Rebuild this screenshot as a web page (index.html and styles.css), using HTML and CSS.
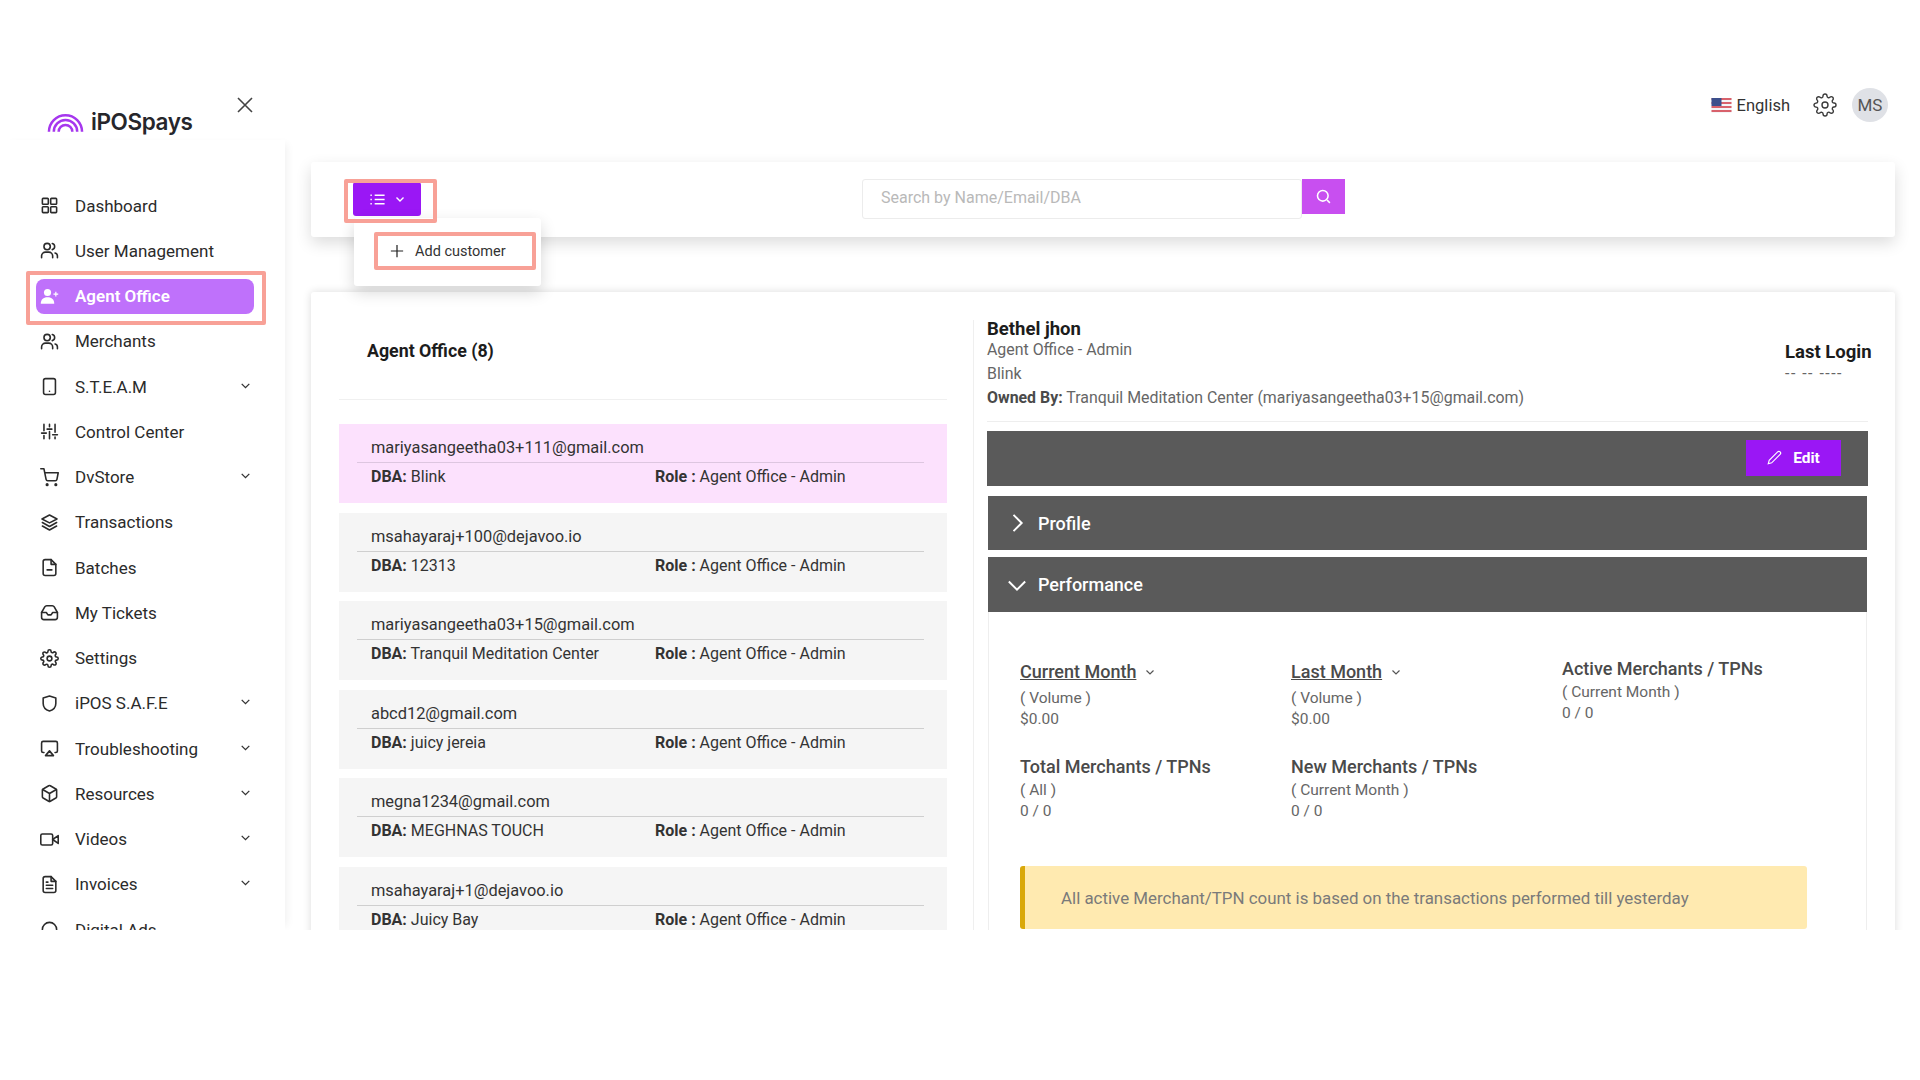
FILE: index.html
```html
<!DOCTYPE html>
<html lang="en">
  <head>
    <meta charset="UTF-8" />
    <title>Agent Office</title>
    <link rel="stylesheet" href="styles.css">
  </head>
  <body>
    <svg class="defs" aria-hidden="true">
      <symbol id="i-grid" viewBox="0 0 24 24"><rect x="3" y="3" width="7.5" height="7.5" rx="1"/><rect x="13.5" y="3" width="7.5" height="7.5" rx="1"/><rect x="3" y="13.5" width="7.5" height="7.5" rx="1"/><rect x="13.5" y="13.5" width="7.5" height="7.5" rx="1"/></symbol>
      <symbol id="i-users" viewBox="0 0 24 24"><path d="M2 21v-2a5 5 0 0 1 5-5h4a5 5 0 0 1 5 5v2"/><circle cx="9" cy="7" r="4"/><path d="M22 21v-2a4 4 0 0 0-3-3.87"/><path d="M15.5 3.13a4 4 0 0 1 0 7.75"/></symbol>
      <symbol id="i-tablet" viewBox="0 0 24 24"><rect x="4.5" y="2" width="15" height="20" rx="2.5"/><path d="M12 18h.01"/></symbol>
      <symbol id="i-sliders" viewBox="0 0 24 24"><path d="M5 3v8M5 17v4M12 3v3M12 12v9M19 3v10M19 19v2M2 14h6M9 9h6M16 16h6"/></symbol>
      <symbol id="i-cart" viewBox="0 0 24 24"><circle cx="9" cy="21" r="1"/><circle cx="20" cy="21" r="1"/><path d="M1 1h4l2.7 13.4a2 2 0 0 0 2 1.6h9.7a2 2 0 0 0 2-1.6L23 6H6"/></symbol>
      <symbol id="i-layers" viewBox="0 0 24 24"><path d="M12 2.5 2.5 7.5l9.5 5 9.5-5z"/><path d="m3 12 9 5 9-5"/><path d="m3 16.5 9 5 9-5"/></symbol>
      <symbol id="i-batch" viewBox="0 0 24 24"><path d="M14 2H6.5A2.5 2.5 0 0 0 4 4.500v15A2.500 2.500 0 0 0 6.500 22h11a2.500 2.500 0 0 0 2.500-2.500V8z"/><path d="M14 2v6h6M9 15h6"/></symbol>
      <symbol id="i-inbox" viewBox="0 0 24 24"><path d="M2 12v6a3 3 0 0 0 3 3h14a3 3 0 0 0 3-3v-6l-4-7a3 3 0 0 0-2.500-1.500h-7A3 3 0 0 0 6 5z"/><path d="M2 12h6l2 3h4l2-3h6"/></symbol>
      <symbol id="i-gear" viewBox="0 0 24 24"><circle cx="12" cy="12" r="3"/><path d="M19.4 15a1.65 1.65 0 0 0 .33 1.82l.06.06a2 2 0 0 1 0 2.83 2 2 0 0 1-2.83 0l-.06-.06a1.65 1.65 0 0 0-1.82-.33 1.65 1.65 0 0 0-1 1.51V21a2 2 0 0 1-2 2 2 2 0 0 1-2-2v-.09A1.65 1.65 0 0 0 9 19.4a1.65 1.65 0 0 0-1.82.33l-.06.06a2 2 0 0 1-2.83 0 2 2 0 0 1 0-2.83l.06-.06a1.65 1.65 0 0 0 .33-1.82 1.65 1.65 0 0 0-1.51-1H3a2 2 0 0 1-2-2 2 2 0 0 1 2-2h.09A1.65 1.65 0 0 0 4.600 9a1.65 1.65 0 0 0-.33-1.82l-.06-.06a2 2 0 0 1 0-2.83 2 2 0 0 1 2.83 0l.06.06a1.65 1.65 0 0 0 1.82.33H9a1.65 1.65 0 0 0 1-1.51V3a2 2 0 0 1 2-2 2 2 0 0 1 2 2v.09a1.65 1.65 0 0 0 1 1.51 1.65 1.65 0 0 0 1.82-.33l.06-.06a2 2 0 0 1 2.83 0 2 2 0 0 1 0 2.83l-.06.06a1.65 1.65 0 0 0-.33 1.82V9a1.65 1.65 0 0 0 1.51 1H21a2 2 0 0 1 2 2 2 2 0 0 1-2 2h-.09a1.65 1.65 0 0 0-1.51 1z"/></symbol>
      <symbol id="i-shield" viewBox="0 0 24 24"><path d="M12 2.500 20 5v7c0 4.800-3.300 8-8 9.500C7.300 20 4 16.800 4 12V5z"/></symbol>
      <symbol id="i-airplay" viewBox="0 0 24 24"><path d="M5 17H4a2 2 0 0 1-2-2V5a2 2 0 0 1 2-2h16a2 2 0 0 1 2 2v10a2 2 0 0 1-2 2h-1"/><path d="m12 15 5 6H7z"/></symbol>
      <symbol id="i-box" viewBox="0 0 24 24"><path d="M21 16V8a2 2 0 0 0-1-1.730l-7-4a2 2 0 0 0-2 0l-7 4A2 2 0 0 0 3 8v8a2 2 0 0 0 1 1.730l7 4a2 2 0 0 0 2 0l7-4a2 2 0 0 0 1-1.730z"/><path d="M3.300 7 12 12l8.700-5M12 22V12"/></symbol>
      <symbol id="i-video" viewBox="0 0 24 24"><rect x="1" y="5" width="15" height="14" rx="2"/><path d="m23 7-7 5 7 5z"/></symbol>
      <symbol id="i-file" viewBox="0 0 24 24"><path d="M14 2H6.500A2.500 2.500 0 0 0 4 4.500v15A2.500 2.500 0 0 0 6.500 22h11a2.500 2.500 0 0 0 2.500-2.500V8z"/><path d="M14 2v6h6M8 13h8M8 17h8M8 9h2"/></symbol>
      <symbol id="i-circle" viewBox="0 0 24 24"><circle cx="12" cy="12" r="9"/></symbol>
      <symbol id="i-chevron" viewBox="0 0 24 24"><path d="m5 9 7 7 7-7"/></symbol>
    </svg>

    <div class="app">
      <aside class="side">
        <div class="brand">
          <div class="logo">
            <svg class="logo-mark" viewBox="0 0 38 20">
              <path d="M2 20a17 17 0 0 1 34 0"/>
              <path d="M7 20a12 12 0 0 1 24 0"/>
              <path d="M12 20a7 7 0 0 1 14 0"/>
            </svg>
            <span>iPOSpays</span>
          </div>
          <svg class="close" viewBox="0 0 16 16"><path d="M1 1l14 14M15 1 1 15"/></svg>
        </div>
        <nav class="nav">
          <a class="nav-item"><svg class="ico"><use href="#i-grid"/></svg>Dashboard</a>
          <a class="nav-item"><svg class="ico"><use href="#i-users"/></svg>User Management</a>
          <a class="nav-item active">
            <svg class="ico-fill" viewBox="0 0 24 24"><circle cx="9.500" cy="7" r="4.500"/><path d="M1 21c0-5 3-8 8.500-8s8.500 3 8.500 8z"/><path class="plus" d="M20 6v6M17 9h6"/></svg>
            Agent Office
            <span class="mark"></span>
          </a>
          <a class="nav-item"><svg class="ico"><use href="#i-users"/></svg>Merchants</a>
          <a class="nav-item"><svg class="ico"><use href="#i-tablet"/></svg>S.T.E.A.M<svg class="caret"><use href="#i-chevron"/></svg></a>
          <a class="nav-item"><svg class="ico"><use href="#i-sliders"/></svg>Control Center</a>
          <a class="nav-item"><svg class="ico"><use href="#i-cart"/></svg>DvStore<svg class="caret"><use href="#i-chevron"/></svg></a>
          <a class="nav-item"><svg class="ico"><use href="#i-layers"/></svg>Transactions</a>
          <a class="nav-item"><svg class="ico"><use href="#i-batch"/></svg>Batches</a>
          <a class="nav-item"><svg class="ico"><use href="#i-inbox"/></svg>My Tickets</a>
          <a class="nav-item"><svg class="ico"><use href="#i-gear"/></svg>Settings</a>
          <a class="nav-item"><svg class="ico"><use href="#i-shield"/></svg>iPOS S.A.F.E<svg class="caret"><use href="#i-chevron"/></svg></a>
          <a class="nav-item"><svg class="ico"><use href="#i-airplay"/></svg>Troubleshooting<svg class="caret"><use href="#i-chevron"/></svg></a>
          <a class="nav-item"><svg class="ico"><use href="#i-box"/></svg>Resources<svg class="caret"><use href="#i-chevron"/></svg></a>
          <a class="nav-item"><svg class="ico"><use href="#i-video"/></svg>Videos<svg class="caret"><use href="#i-chevron"/></svg></a>
          <a class="nav-item"><svg class="ico"><use href="#i-file"/></svg>Invoices<svg class="caret"><use href="#i-chevron"/></svg></a>
          <a class="nav-item"><svg class="ico"><use href="#i-circle"/></svg>Digital Ads</a>
        </nav>
      </aside>

      <main class="main">
        <header class="topbar">
          <svg class="flag" viewBox="0 0 20 15">
            <rect width="20" height="15" fill="#f4f4f6"/>
            <path d="M0 1h20M0 5h20M0 9h20M0 13h20" stroke="#d8616b" stroke-width="2"/>
            <rect width="10" height="8" fill="#3c4f8c"/>
          </svg>
          <span class="lang">English</span>
          <svg class="top-gear"><use href="#i-gear"/></svg>
          <span class="avatar">MS</span>
        </header>

        <section class="toolbar">
          <div class="menu-wrap">
            <button type="button" class="menu-btn">
              <svg class="btn-ico" viewBox="0 0 24 24"><path d="M8 6h14M8 12h14M8 18h14M2 6h2M2 12h2M2 18h2"/></svg>
              <svg class="btn-caret"><use href="#i-chevron"/></svg>
            </button>
            <span class="mark-btn"></span>
            <div class="dropdown">
              <div class="drop-item">
                <svg class="plus-ico" viewBox="0 0 16 16"><path d="M8 1v14M1 8h14"/></svg>
                Add customer
              </div>
            </div>
          </div>
          <div class="search">
            <div class="search-input">Search by Name/Email/DBA</div>
            <button type="button" class="search-btn">
              <svg viewBox="0 0 24 24"><circle cx="11" cy="11" r="7.500"/><path d="m17 17 4 4"/></svg>
            </button>
          </div>
        </section>

        <section class="panel">
          <div class="list-col">
            <h2 class="list-title">Agent Office (8)</h2>
            <div class="list">
              <div class="card selected">
                <div class="email">mariyasangeetha03+111@gmail.com</div>
                <div class="meta"><span class="dba"><b>DBA:</b> Blink</span><span><b>Role :</b> Agent Office - Admin</span></div>
              </div>
              <div class="card">
                <div class="email">msahayaraj+100@dejavoo.io</div>
                <div class="meta"><span class="dba"><b>DBA:</b> 12313</span><span><b>Role :</b> Agent Office - Admin</span></div>
              </div>
              <div class="card">
                <div class="email">mariyasangeetha03+15@gmail.com</div>
                <div class="meta"><span class="dba"><b>DBA:</b> Tranquil Meditation Center</span><span><b>Role :</b> Agent Office - Admin</span></div>
              </div>
              <div class="card">
                <div class="email">abcd12@gmail.com</div>
                <div class="meta"><span class="dba"><b>DBA:</b> juicy jereia</span><span><b>Role :</b> Agent Office - Admin</span></div>
              </div>
              <div class="card">
                <div class="email">megna1234@gmail.com</div>
                <div class="meta"><span class="dba"><b>DBA:</b> MEGHNAS TOUCH</span><span><b>Role :</b> Agent Office - Admin</span></div>
              </div>
              <div class="card">
                <div class="email">msahayaraj+1@dejavoo.io</div>
                <div class="meta"><span class="dba"><b>DBA:</b> Juicy Bay</span><span><b>Role :</b> Agent Office - Admin</span></div>
              </div>
            </div>
          </div>

          <div class="detail">
            <div class="detail-head">
              <div>
                <div class="name">Bethel jhon</div>
                <div class="info">Agent Office - Admin</div>
                <div class="info">Blink</div>
                <div class="info"><b>Owned By:</b> Tranquil Meditation Center (mariyasangeetha03+15@gmail.com)</div>
              </div>
              <div class="last-login">
                <div class="name">Last Login</div>
                <div class="info dashes">-- -- ----</div>
              </div>
            </div>

            <div class="bar bar-edit">
              <button type="button" class="edit-btn">
                <svg viewBox="0 0 24 24"><path d="M17 3a2.800 2.800 0 0 1 4 4L7.500 20.500 2 22l1.500-5.500z"/></svg>
                Edit
              </button>
            </div>
            <div class="bar bar-row">
              <svg class="bar-ico right"><use href="#i-chevron"/></svg>
              Profile
            </div>
            <div class="bar bar-row perf">
              <svg class="bar-ico"><use href="#i-chevron"/></svg>
              Performance
            </div>

            <div class="perf-body">
              <div class="stats">
                <div class="stat low">
                  <div class="stat-title link">Current Month <svg class="mini"><use href="#i-chevron"/></svg></div>
                  <div class="stat-sub gap">( Volume )</div>
                  <div class="stat-val">$0.00</div>
                </div>
                <div class="stat low">
                  <div class="stat-title link">Last Month <svg class="mini"><use href="#i-chevron"/></svg></div>
                  <div class="stat-sub gap">( Volume )</div>
                  <div class="stat-val">$0.00</div>
                </div>
                <div class="stat">
                  <div class="stat-title">Active Merchants / TPNs</div>
                  <div class="stat-sub">( Current Month )</div>
                  <div class="stat-val">0 / 0</div>
                </div>
                <div class="stat">
                  <div class="stat-title">Total Merchants / TPNs</div>
                  <div class="stat-sub">( All )</div>
                  <div class="stat-val">0 / 0</div>
                </div>
                <div class="stat">
                  <div class="stat-title">New Merchants / TPNs</div>
                  <div class="stat-sub">( Current Month )</div>
                  <div class="stat-val">0 / 0</div>
                </div>
              </div>
              <div class="alert">All active Merchant/TPN count is based on the transactions performed till yesterday</div>
            </div>
          </div>
        </section>
      </main>
    </div>
  </body>
</html>
```

FILE: styles.css
```css
body {
  margin: 0;
  background: #fff;
  color: #2b2b2b;
  font-family: Roboto, "Liberation Sans", sans-serif;
}
.defs {
  display: none;
}
svg {
  display: block;
  flex: none;
}
.app {
  display: flex;
  height: 930px;
  overflow: hidden;
}

/* sidebar */
.side {
  width: 285px;
  flex: none;
}
.brand {
  display: flex;
  justify-content: space-between;
  height: 140px;
  padding: 96px 32px 0 47px;
  box-sizing: border-box;
  position: relative;
}
.logo {
  display: flex;
  align-items: center;
  gap: 7px;
  height: 40px;
  margin-top: 5px;
  font-family: Inter, sans-serif;
  font-size: 22.500px;
  font-weight: 600;
  letter-spacing: -0.4px;
  color: #26262b;
}
.logo-mark {
  width: 37px;
  height: 20px;
  margin-top: 1px;
  fill: none;
  stroke: #a637ee;
  stroke-width: 2.600;
}
.close {
  position: absolute;
  top: 97px;
  right: 32px;
  width: 16px;
  height: 16px;
  fill: none;
  stroke: #444;
  stroke-width: 1.6;
}
.nav {
  height: 790px;
  padding: 48px 31px 0 36px;
  box-sizing: border-box;
  box-shadow: 6px 0 8px -4px rgba(0, 0, 0, 0.06);
}
.nav-item {
  position: relative;
  display: flex;
  align-items: center;
  gap: 16px;
  height: 35px;
  margin-bottom: 10.250px;
  padding: 0 4px;
  border-radius: 8px;
  font-size: 17px;
  color: #2b2b2b;
}
.ico {
  width: 19px;
  height: 19px;
  fill: none;
  stroke: #2b2b2b;
  stroke-width: 2;
  stroke-linecap: round;
  stroke-linejoin: round;
}
.caret {
  width: 13px;
  height: 13px;
  margin-left: auto;
  margin-right: -2px;
  margin-top: -3px;
  fill: none;
  stroke: #333;
  stroke-width: 2.4;
}
.nav-item.active {
  background: #bf71fb;
  color: #fff;
  font-weight: 600;
}
.ico-fill {
  width: 19px;
  height: 19px;
  fill: #fff;
}
.ico-fill .plus {
  fill: none;
  stroke: #fff;
  stroke-width: 1.5;
}
.mark {
  position: absolute;
  top: -8px;
  right: -12px;
  bottom: -11px;
  left: -10px;
  border: 4px solid #f8a197;
  border-radius: 2px;
}

/* main column */
.main {
  flex: 1;
  min-width: 0;
  padding: 0 25px 0 26px;
}
.topbar {
  display: flex;
  align-items: center;
  justify-content: flex-end;
  height: 34px;
  margin: 88px 7px 40px 0;
}
.flag {
  width: 21px;
  height: 15px;
  margin-right: 5px;
}
.lang {
  font-size: 16.500px;
  color: #333;
}
.top-gear {
  width: 24px;
  height: 24px;
  margin: 0 15px 0 23px;
  fill: none;
  stroke: #3a3a3a;
  stroke-width: 1.4;
}
.avatar {
  display: flex;
  align-items: center;
  justify-content: center;
  width: 36px;
  height: 34px;
  border-radius: 50%;
  background: #dfe1e6;
  font-size: 17px;
  color: #555;
}

.toolbar {
  position: relative;
  display: flex;
  align-items: flex-start;
  height: 75px;
  padding: 20px 0 0 42px;
  box-sizing: border-box;
  border-radius: 3px;
  box-shadow: 0 6px 16px rgba(0, 0, 0, 0.14);
  background: #fff;
}
.menu-wrap {
  position: relative;
  width: 68px;
  margin-right: 441px;
}
.menu-btn {
  display: flex;
  align-items: center;
  justify-content: center;
  gap: 8px;
  width: 68px;
  height: 34px;
  padding: 0;
  border: none;
  border-radius: 3px;
  background: #9a17f5;
}
.btn-ico {
  width: 17px;
  height: 17px;
  fill: none;
  stroke: #fff;
  stroke-width: 1.8;
}
.btn-caret {
  width: 12px;
  height: 12px;
  fill: none;
  stroke: #fff;
  stroke-width: 2.8;
}
.mark-btn {
  position: absolute;
  z-index: 3;
  top: -3px;
  left: -9px;
  width: 93px;
  height: 44px;
  box-sizing: border-box;
  border: 4px solid #f8a197;
  border-radius: 2px;
}
.dropdown {
  position: absolute;
  z-index: 2;
  top: 36px;
  left: 1px;
  width: 187px;
  height: 68px;
  padding: 14px 5px 0 20px;
  box-sizing: border-box;
  border-radius: 3px;
  background: #fff;
  box-shadow: 0 6px 16px rgba(0, 0, 0, 0.16);
}
.drop-item {
  display: flex;
  align-items: center;
  gap: 11px;
  height: 38px;
  padding-left: 12px;
  box-sizing: border-box;
  border: 4px solid #f8a197;
  border-radius: 2px;
  font-size: 14.500px;
  color: #333;
}
.plus-ico {
  width: 14px;
  height: 14px;
  fill: none;
  stroke: #222;
  stroke-width: 1.400;
}
.search {
  display: flex;
  align-items: flex-start;
  margin-top: -3px;
}
.search-input {
  width: 440px;
  height: 40px;
  padding: 0 18px;
  box-sizing: border-box;
  border: 1px solid #ececec;
  border-radius: 3px;
  font-size: 16px;
  line-height: 36px;
  color: #b9b9b9;
}
.search-btn {
  display: flex;
  align-items: center;
  justify-content: center;
  width: 43px;
  height: 35px;
  padding: 0;
  border: none;
  background: #c84ff0;
}
.search-btn svg {
  width: 17px;
  height: 17px;
  fill: none;
  stroke: #fff;
  stroke-width: 2.200;
}

/* main panel */
.panel {
  display: flex;
  margin-top: 55px;
  height: 700px;
  border-radius: 3px;
  box-shadow: 0 0 8px rgba(0, 0, 0, 0.14);
  background: #fff;
}
.list-col {
  width: 662px;
  flex: none;
  padding-left: 28px;
  padding-right: 26px;
  box-sizing: border-box;
}
.list-title {
  height: 108px;
  margin: 0 0 24px;
  padding-top: 48px;
  box-sizing: border-box;
  border-bottom: 1px solid #f0f0f0;
  padding-left: 28px;
  font-size: 17.800px;
  font-weight: 700;
  line-height: 22px;
  color: #1c1c1c;
}
.card {
  height: 79px;
  margin-bottom: 9.600px;
  padding: 13px 0 0;
  box-sizing: border-box;
  background: #f5f5f5;
}
.card.selected {
  background: #fce1fd;
}
.email {
  height: 25px;
  margin: 0 23px 0 18px;
  padding-left: 14px;
  border-bottom: 1px solid #cfcfcf;
  font-size: 16.400px;
  line-height: 22px;
  color: #333;
}
.selected .email {
  border-bottom-color: #ddc6e0;
}
.meta {
  display: flex;
  padding: 3px 0 0 32px;
  font-size: 16px;
  line-height: 22px;
  color: #333;
}
.dba {
  width: 284px;
  flex: none;
}
.detail {
  flex: 1;
  min-width: 0;
  margin-top: 28px;
  padding: 0 27px 0 13px;
  border-left: 1px solid #efefef;
}
.detail-head {
  display: flex;
  justify-content: space-between;
  height: 100px;
  padding-top: 1px;
  border-bottom: 1px solid #eee;
}
.name {
  margin-bottom: 2px;
  font-size: 18.500px;
  font-weight: 700;
  line-height: 16px;
  color: #1c1c1c;
}
.info {
  margin-top: 2px;
  font-size: 15.900px;
  line-height: 22px;
  color: #666;
}
.info b {
  color: #4a4a4a;
}
.last-login {
  width: 90px;
  padding-top: 23px;
  margin-right: -7px;
}
.last-login .info {
  margin-top: 3px;
}
.info.dashes {
  letter-spacing: 1.500px;
}
.bar {
  display: flex;
  align-items: center;
  background: #5a5a5a;
  color: #fff;
}
.bar-edit {
  justify-content: flex-end;
  height: 55px;
  margin-top: 9px;
  padding-right: 27px;
}
.edit-btn {
  display: flex;
  align-items: center;
  justify-content: center;
  gap: 11px;
  width: 95px;
  height: 36px;
  margin-top: -2px;
  padding: 0;
  border: none;
  background: #9a17f5;
  font-family: inherit;
  font-size: 15.500px;
  font-weight: 700;
  color: #fff;
}
.edit-btn svg {
  width: 15px;
  height: 15px;
  fill: none;
  stroke: #fff;
  stroke-width: 1.800;
}
.bar-row {
  gap: 7px;
  height: 54px;
  margin: 10px 1px 0;
  padding-left: 15px;
  font-size: 18px;
  font-weight: 500;
}
.bar-row.perf {
  height: 55px;
  margin-top: 7px;
}
.bar-ico {
  width: 28px;
  height: 28px;
  fill: none;
  stroke: #fff;
  stroke-width: 1.700;
}
.bar-ico.right {
  transform: rotate(-90deg);
}
.perf-body {
  margin: 0 1px;
  padding: 45px 0 0 31px;
  height: 320px;
  box-sizing: border-box;
  border: 1px solid #eee;
  border-top: none;
}
.stats {
  display: grid;
  grid-template-columns: repeat(3, 271px);
  grid-template-rows: 98px 66px;
}
.stat.low {
  padding-top: 3px;
}
.stat-title {
  font-size: 18px;
  font-weight: 500;
  line-height: 24px;
  color: #4a4a4a;
}
.stat-title.link {
  display: flex;
  align-items: center;
  gap: 8px;
  text-decoration: underline;
}
.mini {
  width: 12px;
  height: 12px;
  fill: none;
  stroke: #555;
  stroke-width: 2.400;
}
.stat-sub {
  font-size: 15.500px;
  line-height: 22px;
  color: #666;
}
.stat-sub.gap {
  margin-top: 3px;
}
.stat-val {
  font-size: 15.500px;
  line-height: 20px;
  color: #666;
}
.alert {
  display: flex;
  align-items: center;
  width: 787px;
  height: 63px;
  margin-top: 45px;
  padding-left: 36px;
  box-sizing: border-box;
  border-left: 5px solid #d9a80a;
  border-radius: 3px;
  background: #ffeab0;
  font-size: 16.900px;
  color: #7a7a7a;
}
```
